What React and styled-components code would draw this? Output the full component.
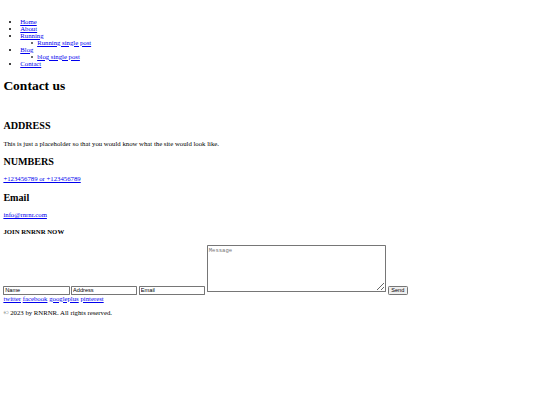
import React from "react";
import styled, { createGlobalStyle } from "styled-components";

const K = 0.421875;
const s = (n) => `${(n * K).toFixed(3)}px`;

const Global = createGlobalStyle`
  body {
    margin: ${s(8)};
    background: #fff;
    color: #000;
    font-family: "Liberation Serif", "Times New Roman", serif;
    font-size: ${s(16)};
  }
`;

const Header = styled.header`
  padding-top: ${s(18)};
`;

const NavList = styled.ul`
  margin: ${s(16)} 0 ${s(26)};
  padding-left: ${s(40)};
  list-style: disc;
`;

const SubList = styled.ul`
  margin: 0;
  padding-left: ${s(40)};
  list-style: none;
`;

const SubItem = styled.li`
  position: relative;
  &::before {
    content: "";
    position: absolute;
    box-sizing: border-box;
    left: ${s(-15)};
    top: ${s(7)};
    width: ${s(6)};
    height: ${s(6)};
    border: ${s(1.2)} solid #000;
    border-radius: 50%;
  }
`;

const Link = styled.a`
  color: #0000ee;
  text-decoration: underline;
`;

const Title = styled.h1`
  font-size: ${s(32)};
  margin: ${s(21.44)} 0;
  font-weight: bold;
`;

const Section = styled.section`
  padding-top: ${s(19)};
`;

const Heading = styled.h2`
  font-size: ${s(24)};
  margin: ${s(22.3)} 0 ${s(19.92)};
  font-weight: bold;
`;

const Text = styled.p`
  margin: ${s(16)} 0;
`;

const Join = styled.h4`
  font-size: ${s(16)};
  margin: ${s(23)} 0 ${s(23.7)};
  font-weight: bold;
`;

const Form = styled.form`
  margin: 0;
`;

const Field = styled.input`
  font-family: "Liberation Sans", Arial, sans-serif;
  font-size: ${s(13.333)};
  width: ${s(148)};
  padding: ${s(1)} ${s(2)};
  border: ${s(1)} solid #767676;
  border-radius: ${s(2)};
  &::placeholder { color: #000; }
`;

const Message = styled.textarea`
  font-family: "Liberation Mono", "Courier New", monospace;
  font-size: ${s(13.333)};
  width: ${s(416)};
  height: ${s(104)};
  padding: ${s(2)};
  border: ${s(1)} solid #767676;
  border-radius: ${s(2)};
  &::placeholder { color: #757575; }
`;

const Send = styled.button`
  font-family: "Liberation Sans", Arial, sans-serif;
  font-size: ${s(13.333)};
  padding: ${s(1)} ${s(6)};
  border: ${s(1)} solid #767676;
  border-radius: ${s(3)};
  background: #efefef;
  color: #000;
`;

const Social = styled.div``;

const Copyright = styled.p`
  margin: ${s(18)} 0 ${s(16)};
`;

export default function App() {
  return (
    <>
      <Global />
      <Header>
        <nav>
          <NavList>
            <li><Link href="#">Home</Link></li>
            <li><Link href="#">About</Link></li>
            <li>
              <Link href="#">Running</Link>
              <SubList>
                <SubItem><Link href="#">Running single post</Link></SubItem>
              </SubList>
            </li>
            <li>
              <Link href="#">Blog</Link>
              <SubList>
                <SubItem><Link href="#">blog single post</Link></SubItem>
              </SubList>
            </li>
            <li><Link href="#">Contact</Link></li>
          </NavList>
        </nav>
      </Header>
      <main>
        <Title>Contact us</Title>
        <Section>
          <Heading>ADDRESS</Heading>
          <Text>This is just a placeholder so that you would know what the site would look like.</Text>
          <Heading>NUMBERS</Heading>
          <Text><Link href="#">+123456789 or +123456789</Link></Text>
          <Heading>Email</Heading>
          <Text><Link href="#">info@rnrnr.com</Link></Text>
        </Section>
      </main>
      <footer>
        <Join>JOIN RNRNR NOW</Join>
        <Form onSubmit={(e) => e.preventDefault()}>
          <Field placeholder="Name" /> <Field placeholder="Address" />{" "}
          <Field placeholder="Email" /> <Message placeholder="Message" />{" "}
          <Send type="submit">Send</Send>
        </Form>
        <Social>
          <Link href="#">twitter</Link> <Link href="#">facebook</Link>{" "}
          <Link href="#">googleplus</Link> <Link href="#">pinterest</Link>
        </Social>
        <Copyright>© 2023 by RNRNR. All rights reserved.</Copyright>
      </footer>
    </>
  );
}
